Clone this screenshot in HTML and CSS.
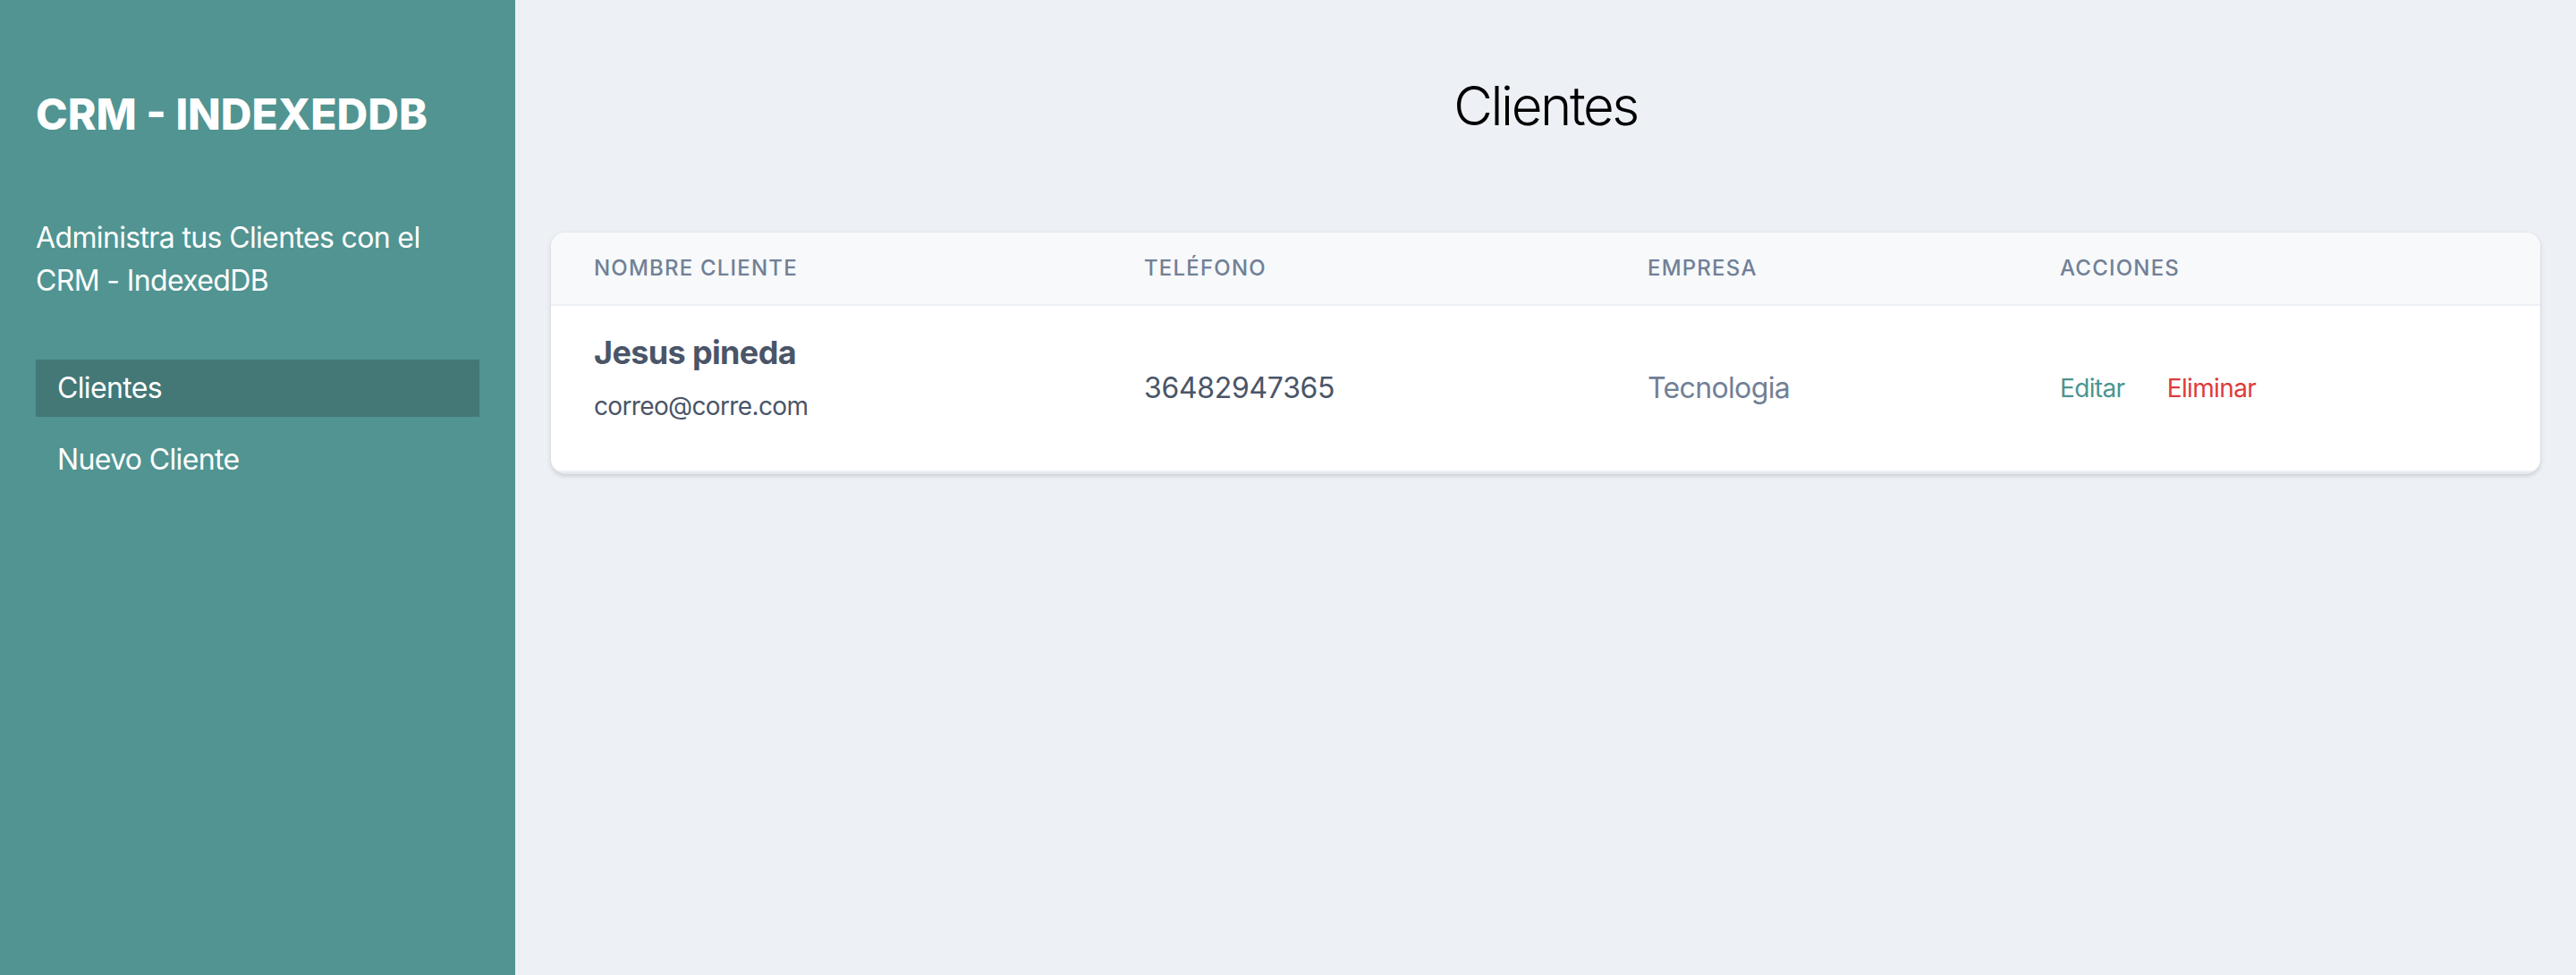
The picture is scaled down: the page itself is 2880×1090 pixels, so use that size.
FILE: index.html
```html
<!DOCTYPE html>
<html lang="es">
<head>
<meta charset="utf-8">
<title>CRM - IndexedDB</title>
<link rel="stylesheet" href="styles.css">
</head>
<body>
<div class="layout">
  <aside class="sidebar">
    <h2 class="brand">CRM - INDEXEDDB</h2>
    <p class="intro">Administra tus Clientes con el CRM - IndexedDB</p>
    <nav class="nav">
      <a href="#" class="nav-link active">Clientes</a>
      <a href="#" class="nav-link">Nuevo Cliente</a>
    </nav>
  </aside>
  <main class="main">
    <h2 class="page-title">Clientes</h2>
    <div class="card">
      <table class="table">
        <colgroup>
          <col class="col-name">
          <col class="col-phone">
          <col class="col-company">
          <col class="col-actions">
        </colgroup>
        <thead>
          <tr>
            <th>Nombre Cliente</th>
            <th>Teléfono</th>
            <th>Empresa</th>
            <th>Acciones</th>
          </tr>
        </thead>
        <tbody>
          <tr>
            <td>
              <p class="client-name">Jesus pineda</p>
              <p class="client-email">correo@corre.com</p>
            </td>
            <td><p class="client-phone">36482947365</p></td>
            <td><p class="client-company">Tecnologia</p></td>
            <td class="actions">
              <a href="#" class="edit">Editar</a> <a href="#" class="delete">Eliminar</a>
            </td>
          </tr>
        </tbody>
      </table>
    </div>
  </main>
</div>
</body>
</html>
```
FILE: styles.css
```css
* { box-sizing: border-box; }
html, body { margin: 0; padding: 0; }
body {
  font-family: Inter, "Liberation Sans", Arial, sans-serif;
  font-size: 32px;
  line-height: 1.5;
  letter-spacing: -0.02em;
  color: #000;
  background: #edf1f6;
}
.layout {
  display: flex;
  min-height: 1090px;
}
.sidebar {
  width: 576px;
  flex-shrink: 0;
  background: #519491;
  padding: 80px 40px;
  color: #fff;
}
.brand {
  margin: 16px 0 0;
  font-size: 48px;
  line-height: 64px;
  font-weight: 800;
  letter-spacing: 0;
  color: #fff;
}
.intro {
  margin: 82px 0 0;
  font-size: 32px;
  line-height: 48px;
}
.nav {
  margin-top: 64px;
  display: flex;
  flex-direction: column;
  gap: 16px;
}
.nav-link {
  display: block;
  padding: 8px 24px;
  font-size: 32px;
  line-height: 48px;
  color: #fff;
  text-decoration: none;
}
.nav-link.active { background: #437877; }
.main {
  flex: 1;
  padding: 80px 40px;
  background: #edf1f6;
}
.page-title {
  margin: 0;
  padding-top: 2px;
  font-size: 60px;
  line-height: 72px;
  font-weight: 300;
  letter-spacing: -0.04em;
  text-align: center;
  color: #000;
}
.card {
  margin-top: 106px;
  background: #fff;
  border-radius: 16px;
  overflow: hidden;
  border-bottom: 2px solid #e6eaef;
  box-shadow: 0 2px 6px 0 rgba(0,0,0,0.10), 0 2px 4px 0 rgba(0,0,0,0.06);
}
.table {
  width: 100%;
  border-collapse: collapse;
  table-layout: fixed;
}
.col-name { width: 615px; }
.col-phone { width: 563px; }
.col-company { width: 461px; }
.table th {
  padding: 24px 48px;
  background: #f7f9fb;
  border-bottom: 2px solid #edf1f6;
  text-align: left;
  font-size: 24px;
  line-height: 32px;
  font-weight: 500;
  color: #718096;
  text-transform: uppercase;
  letter-spacing: 0.05em;
}
.table td {
  padding: 32px 48px;
  border-bottom: 2px solid #edf1f6;
  vertical-align: middle;
  white-space: nowrap;
}
.table p { margin: 0; }
.client-name {
  font-size: 36px;
  line-height: 40px;
  font-weight: 700;
  color: #4a5568;
}
.client-email {
  font-size: 28px;
  line-height: 80px;
  color: #4a5568;
}
.client-phone {
  font-size: 32px;
  line-height: 48px;
  letter-spacing: -0.01em;
  color: #4a5568;
}
.client-company {
  font-size: 32px;
  line-height: 48px;
  color: #718096;
}
.actions {
  font-size: 28px;
  line-height: 40px;
}
.actions a { text-decoration: none; }
.edit { color: #4a958f; margin-right: 40px; }
.delete { color: #dd3b3b; }
```
